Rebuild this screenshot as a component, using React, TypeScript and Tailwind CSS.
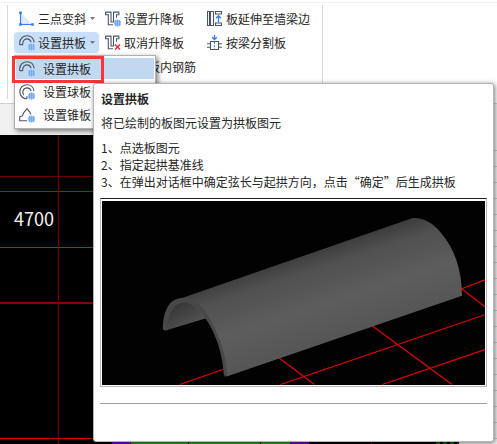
import React from 'react';
import clsx from 'clsx';

interface IconProps {
    className?: string;
}

const STEPS = ['点选板图元', '指定起拱基准线', '在弹出对话框中确定弦长与起拱方向，点击“确定”后生成拱板'];

const Icon: React.FC<React.PropsWithChildren<IconProps>> = ({ className, children }) => (
    <svg viewBox="0 0 16 16" className={clsx('h-4 w-4 shrink-0', className)} fill="none" stroke="#4b5563" strokeWidth="1.1" aria-hidden="true">
        {children}
    </svg>
);

// small blue mesh ball in the lower right corner of the slab icons
const Globe = () => (
    <g stroke="none">
        <circle cx="12.5" cy="12" r="3.5" fill="#b5d2fb" />
        <path d="M10.5 9v6M12.5 8.400v7.200M14.500 9v6M9.400 10.200h6.200M8.900 12h7.200M9.400 13.800h6.200" stroke="#5b9bf0" strokeWidth="0.6" />
    </g>
);

const SlopeIcon = () => (
    <Icon>
        <path d="M1.5 2v11.500h12z" fill="#dce9f8" stroke="none" />
        <path d="M1.5 2v11.500h12" stroke="#2f80ed" />
        <path d="M.2.600h2.600v2.600H.2zM.2 12.200h2.600v2.600H.2zM12.200 12.200h2.600v2.600h-2.600z" fill="#2f80ed" stroke="none" />
    </Icon>
);

const ArchIcon = () => (
    <Icon>
        <path d="M.6 9.600V8C.8 3.700 4 .700 8 .700c3.800 0 6.600 2.700 7.200 6.600" />
        <path d="M.6 9.600h3.200M3.800 9.600V8.200C3.800 5.800 5.700 3.900 8.100 3.900c2 0 3.400 1.200 4 3.200" />
        <Globe />
    </Icon>
);

const SphereIcon = () => (
    <Icon>
        <path d="M8 14.800C4 14.800.8 11.700.8 7.700S4 .700 8 .700c3.600 0 6.500 2.600 7 6.400" />
        <path d="M4.800 11.200C2.600 8.200 4.200 3.900 8.100 3.900c2 0 3.400 1.200 4 3.100M8 14.800v-2.600" />
        <Globe />
    </Icon>
);

const ConeIcon = () => (
    <Icon>
        <path d="M8 13.700H.7V9.900l2.700-1L5 5.300 8 1.600l3 3.700.9 2" />
        <Globe />
    </Icon>
);

const StepPath = () => <path d="M.6 1.100H6V11h2.500V1.100h5.400v2.600h-2.400v3M.6 1.100v2.600h2.700v10H8" />;

const StepIcon = () => (
    <Icon>
        <StepPath />
        <Globe />
    </Icon>
);

const CancelStepIcon = () => (
    <Icon>
        <StepPath />
        <path d="M10 9.500l5 5M15 9.500l-5 5" stroke="#e5262b" strokeWidth="1.400" />
    </Icon>
);

const ExtendIcon = () => (
    <Icon>
        <path d="M.5.500h2v14h-2zM3.500.500h3v14h-3zM8.500.500h6v2.500h-6zM8.500 12h6v2.500h-6z" />
        <path d="M11.500 11V5M9 7.200l2.500-2.500L14 7.200" stroke="#2f80ed" strokeWidth="1.300" />
    </Icon>
);

const SplitIcon = () => (
    <Icon>
        <path d="M3.500 6.500h8v8h-8zM0 8.800h3.500M0 12.200h3.500M11.500 8.800H15M11.500 12.200H15" />
        <path d="M7.500 0v4M5.200 2.200l2.300 2.300 2.300-2.300" stroke="#2f80ed" strokeWidth="1.300" />
        <path d="M7.500 7v7" stroke="#2f80ed" strokeDasharray="2 1.200" />
    </Icon>
);

interface ToolButtonProps {
    icon: React.ReactNode;
    label: string;
    active?: boolean;
    dropdown?: boolean;
}

const ToolButton: React.FC<ToolButtonProps> = ({ icon, label, active, dropdown }) => (
    <button
      type="button"
      aria-expanded={dropdown ? !!active : undefined}
      className={clsx('flex h-[21px] items-center gap-[3px] rounded-sm pl-[5px] pr-1 whitespace-nowrap', active && 'bg-[#c7dff8]')}
    >
        {icon}
        <span>{label}</span>
        {dropdown && (
            <svg viewBox="0 0 5 3" className="ml-px h-[3px] w-[5px]" aria-hidden="true">
                <path d="M0 0h5L2.500 3z" fill="#777" />
            </svg>
        )}
    </button>
);

const MENU_ITEMS = [
    { label: '设置拱板', icon: <ArchIcon /> },
    { label: '设置球板', icon: <SphereIcon /> },
    { label: '设置锥板', icon: <ConeIcon /> },
];

const SlabMenu = () => (
    <div role="menu" className="absolute left-0 top-full z-10 mt-0.5 w-[142px] border border-[#b0b0b0] bg-white p-px pt-0.5 shadow-[2px_2px_5px_rgba(0,0,0,0.5)]">
        {MENU_ITEMS.map(({ label, icon }, i) => (
            <button
              type="button"
              role="menuitem"
              key={label}
              className={clsx('relative mb-0.5 flex h-[21px] w-full items-center gap-2 pl-[3px]', i === 0 && 'bg-[#c1d9f0]')}
            >
                {icon}
                <span>{label}</span>
                {i === 0 && <span className="absolute -left-1 -top-0.5 h-[27px] w-[92px] border-3 border-[#f93535]" />}
            </button>
        ))}
    </div>
);

const Ribbon = () => (
    <header className="relative z-10 flex h-[104px] shrink-0 border-b border-[#d0d0d0] bg-white pl-[7px] pt-[5px]">
        <div className="absolute inset-x-0 top-0 h-[3px] border-b border-[#f0f0f0]" />
        <div className="mb-1 flex grow items-start border-l border-[#d9d9d9] pl-1.5 pt-[3px]">
            <div className="flex w-[86px] flex-col items-start gap-[3px]">
                <ToolButton icon={<SlopeIcon />} label="三点变斜" dropdown />
                <div className="relative">
                    <ToolButton icon={<ArchIcon />} label="设置拱板" active dropdown />
                    <SlabMenu />
                </div>
            </div>
            <div className="flex w-[102px] flex-col items-start gap-[3px]">
                <ToolButton icon={<StepIcon />} label="设置升降板" />
                <ToolButton icon={<CancelStepIcon />} label="取消升降板" />
                <ToolButton icon={<StepIcon />} label="查改板内钢筋" />
            </div>
            <div className="-mt-[3px] flex w-[121px] flex-col items-start gap-[3px] self-stretch border-r border-[#d9d9d9] pt-[3px]">
                <ToolButton icon={<ExtendIcon />} label="板延伸至墙梁边" />
                <ToolButton icon={<SplitIcon />} label="按梁分割板" />
            </div>
        </div>
    </header>
);

const PlanCanvas = () => (
    <svg className="h-full min-w-0 grow bg-black" shapeRendering="crispEdges" aria-label="平面图">
        <path d="M0 41.500h600" stroke="#6b0000" />
        <path d="M0 56.500h600" stroke="#006b00" />
        <path d="M0 112.500h600" stroke="#008000" />
        <path d="M0 168h600" stroke="#8b0000" strokeWidth="2" />
        <path d="M0 303.500h600" stroke="#d00000" />
        <path d="M58.500 0v600" stroke="#7a0000" />
        <path d="M112 308h197" stroke="#7000c8" strokeWidth="2" />
        <path d="M131 308h159" stroke="#20a020" strokeWidth="2" />
        <path d="M188.500 307v9M260.500 307v9M371.500 307v9" stroke="#7a0000" />
        <path d="M436 308h22" stroke="#106010" strokeWidth="2" strokeDasharray="4 3" />
        <text x="14" y="91" fill="#f2f2f2" className="text-[18px]">4700</text>
    </svg>
);

const ArchPreview = () => (
    <svg viewBox="102 201 384 184" className="block w-full bg-[#020203]" role="img" aria-label="拱板示意图">
        <defs>
            <linearGradient id="shell" x1="290" y1="258" x2="318" y2="344" gradientUnits="userSpaceOnUse">
                <stop offset="0" stopColor="#3c3c3c" />
                <stop offset="0.200" stopColor="#505050" />
                <stop offset="0.600" stopColor="#5d5d5d" />
                <stop offset="1" stopColor="#565656" />
            </linearGradient>
            <linearGradient id="inside" x1="170" y1="300" x2="185" y2="328" gradientUnits="userSpaceOnUse">
                <stop offset="0" stopColor="#303030" />
                <stop offset="1" stopColor="#505050" />
            </linearGradient>
        </defs>
        <g stroke="#e60000" strokeWidth="1.200">
            <path d="M180 385l46-16M281 385l205-70M383 385l103-35M460 290l26-10" />
            <path d="M460 287l26 20M370 324l83 61M275 355l40 30" />
        </g>
        <path d="M165 331C166 314 172 302 183 300L200 306 208 318z" fill="url(#inside)" />
        <path d="M180 299L412 218.500C420 217 431 220 442 233C455 248 463 270 463 296L227 377C225 350 210 312 184 300z" fill="url(#shell)" />
        <path d="M163 330C163 312 169 300 180 298.500C193 297 203 306 210 319C220 336 227 358 227.500 376.500L225 377L224 374C223 355 216 334 207 320C199 307 190 302 182 303C173 305 168 316 166.500 330.500z" fill="#484848" />
    </svg>
);

const Tooltip = () => (
    <section role="tooltip" className="absolute left-[93px] right-[3px] top-[83px] z-20 rounded-[3px] border border-[#b4b4b4] bg-white px-1.5 pb-[37px] shadow-[1px_1px_5px_rgba(0,0,0,0.5)]">
        <h2 className="pl-px pt-1.5 font-bold leading-[18px]">设置拱板</h2>
        <p className="mt-1.5 pl-px leading-[18px]">将已绘制的板图元设置为拱板图元</p>
        <ol className="mt-[7px] pl-px leading-[17px]">
            {STEPS.map((step, i) => (
                <li key={step} className="whitespace-nowrap">{`${i + 1}、${step}`}</li>
            ))}
        </ol>
        <div className="mt-2 border border-[#b8b8b8] border-t-[#222] p-px pt-0.5">
            <ArchPreview />
        </div>
        <hr className="mt-4 border-[#a0a0a0]" />
    </section>
);

export default function App() {
    return (
        <div lang="zh-CN" className="relative flex h-screen flex-col overflow-hidden bg-[#f0f0f0] font-['Noto_Sans_CJK_SC',sans-serif] text-xs text-[#262626]">
            <Ribbon />
            <main className="mt-[31px] flex min-h-0 grow">
                <PlanCanvas />
                <aside className="w-[38px] shrink-0 divide-y divide-[#c8c8c8] bg-[#f0f0f0]">
                    {Array.from({ length: 20 }, (_, i) => <div key={i} className="h-4" />)}
                </aside>
            </main>
            <Tooltip />
        </div>
    );
}
